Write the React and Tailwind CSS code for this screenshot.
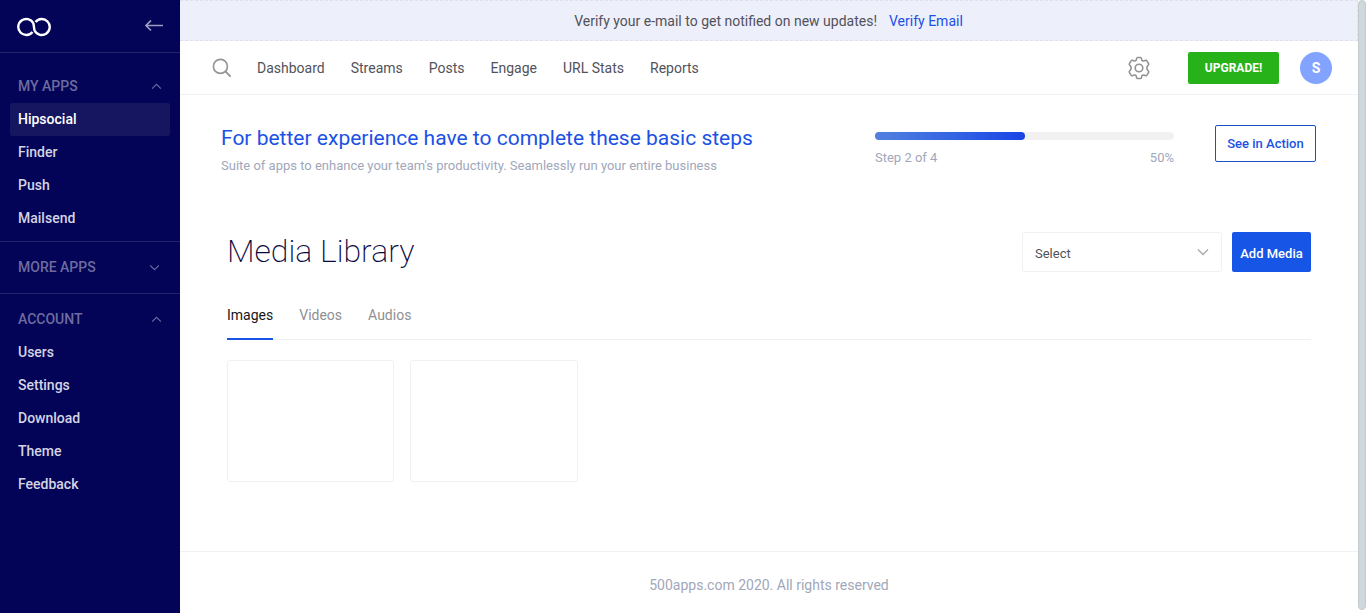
const chevronPaths = {
  up: "M1 6.5 6 1.5l5 5",
  down: "M1 1.5l5 5 5-5",
};

function Chevron({ direction, className }) {
  return (
    <svg viewBox="0 0 12 8" fill="none" stroke="currentColor" strokeWidth="1.3" className={className} aria-hidden="true">
      <path d={chevronPaths[direction]} />
    </svg>
  );
}

function SectionTitle({ label, open }) {
  return (
    <button
      type="button"
      aria-expanded={open}
      className={
        open
          ? "flex h-[34px] w-full items-center justify-between px-[18px] text-sm font-medium text-[#6d6c9f]"
          : "flex h-[34px] w-full items-center justify-between pr-5 pl-[18px] text-sm font-medium text-[#6d6c9f]"
      }
    >
      {label}
      <Chevron direction={open ? "up" : "down"} className="h-[7px] w-[11px]" />
    </button>
  );
}

function SideLinks({ items, active }) {
  return (
    <ul className="px-[10px]">
      {items.map((item) => (
        <li key={item}>
          <a
            href="#"
            className={
              item === active
                ? "flex h-[33px] items-center rounded-xs bg-[#151560] px-2 pb-[2px] text-sm font-medium text-white"
                : "flex h-[33px] items-center px-2 pb-[2px] text-sm font-medium text-[#d4d4e3]"
            }
          >
            {item}
          </a>
        </li>
      ))}
    </ul>
  );
}

function Sidebar() {
  return (
    <aside className="w-[180px] shrink-0 bg-[#030357]">
      <div className="flex h-[53px] items-center justify-between border-b border-[#232369] px-[17px]">
        <a href="#" aria-label="Home" className="pt-[2px]">
          <svg viewBox="0 0 34 20" fill="none" stroke="#fff" strokeWidth="2.4" className="h-5 w-[34px]" aria-hidden="true">
            <path d="M15.5 15A8 8 0 1 1 16.3 6.2C17 8 16.9 12 17.7 13.8A8 8 0 1 0 18.5 5" />
          </svg>
        </a>
        <button type="button" aria-label="Collapse sidebar" className="text-[#9c9bc0]">
          <svg viewBox="0 0 18 12" fill="none" stroke="currentColor" strokeWidth="1.7" className="h-3 w-[18px]" aria-hidden="true">
            <path d="M18 5.5H1M6 .5 1 5.5l5 5" />
          </svg>
        </button>
      </div>
      <div className="border-b border-[#232369] pt-4 pb-[6px]">
        <SectionTitle label="MY APPS" open />
        <SideLinks items={["Hipsocial", "Finder", "Push", "Mailsend"]} active="Hipsocial" />
      </div>
      <div className="border-b border-[#232369] pt-2 pb-[9px]">
        <SectionTitle label="MORE APPS" open={false} />
      </div>
      <div className="pt-2">
        <SectionTitle label="ACCOUNT" open />
        <SideLinks items={["Users", "Settings", "Download", "Theme", "Feedback"]} />
      </div>
    </aside>
  );
}

function GearIcon() {
  return (
    <svg viewBox="0 0 24 24" fill="none" stroke="currentColor" strokeWidth="1.6" strokeLinejoin="round" className="size-6" aria-hidden="true">
      <circle cx="12" cy="12" r="3.8" />
      <path d="M9.6 2.4Q9.8 1.5 10.6 1.5H13.4Q14.2 1.5 14.4 2.4L14.8 4.2Q15.6 5.2 16.9 4.9L18.6 4.3Q19.4 4 19.9 4.8L21.6 7.6Q22 8.4 21.4 9L20.3 10.2Q19.4 12 20.3 13.8L21.4 15Q22 15.6 21.6 16.4L19.9 19.2Q19.4 20 18.6 19.7L16.9 19.1Q15.6 18.8 14.8 19.8L14.4 21.6Q14.2 22.5 13.4 22.5H10.6Q9.8 22.5 9.6 21.6L9.2 19.8Q8.4 18.8 7.1 19.1L5.4 19.7Q4.6 20 4.1 19.2L2.4 16.4Q2 15.6 2.6 15L3.7 13.8Q4.6 12 3.7 10.2L2.6 9Q2 8.4 2.4 7.6L4.1 4.8Q4.6 4 5.4 4.3L7.1 4.9Q8.4 5.2 9.2 4.2Z" />
    </svg>
  );
}

function TopBar() {
  const links = ["Dashboard", "Streams", "Posts", "Engage", "URL Stats", "Reports"];
  return (
    <header className="flex h-[54px] items-center justify-between border-b border-[#f1f1f3] pl-8 pr-[26px]">
      <div className="flex items-center gap-[25px]">
        <button type="button" aria-label="Search" className="text-[#969696]">
          <svg viewBox="0 0 20 20" fill="none" stroke="currentColor" strokeWidth="1.7" className="size-5" aria-hidden="true">
            <circle cx="8.4" cy="8.4" r="7" />
            <path d="M13.4 13.4 18.6 18.6" strokeWidth="2" />
          </svg>
        </button>
        <nav className="flex items-center gap-[26px] pt-px text-sm text-[#52525a]">
          {links.map((link) => (
            <a key={link} href="#">
              {link}
            </a>
          ))}
        </nav>
      </div>
      <div className="flex items-center">
        <button type="button" aria-label="Settings" className="mr-[37px] text-[#929292]">
          <GearIcon />
        </button>
        <button type="button" className="mr-[21px] h-8 w-[91px] rounded-xs bg-[#26b218] text-xs font-bold text-white">
          UPGRADE!
        </button>
        <button type="button" aria-label="Account" className="size-8 rounded-full bg-[#82a3ff] text-sm font-bold text-white">
          S
        </button>
      </div>
    </header>
  );
}

function Onboarding() {
  return (
    <section className="flex items-start pl-[41px] pr-[42px] pt-[30px]">
      <div className="flex-1">
        <h2 className="text-[21px] leading-[26px] text-[#1b51e5]">
          For better experience have to complete these basic steps
        </h2>
        <p className="mt-[5px] text-[13px] leading-5 text-[#a1a7ba]">
          Suite of apps to enhance your team's productivity. Seamlessly run your entire business
        </p>
      </div>
      <div className="mr-[41px] w-[299px] pt-[7px]">
        <div
          role="progressbar"
          aria-label="Setup progress"
          aria-valuenow={50}
          aria-valuemin={0}
          aria-valuemax={100}
          className="h-2 rounded-full bg-[#f1f1f1]"
        >
          <div className="h-2 w-1/2 rounded-full bg-linear-to-r from-[#5380de] to-[#1a43e6]" />
        </div>
        <div className="mt-2 flex justify-between text-[13px] leading-5 text-[#a1a7ba]">
          <span>Step 2 of 4</span>
          <span>50%</span>
        </div>
      </div>
      <button type="button" className="h-[37px] w-[101px] rounded-xs border border-[#1b51c8] text-[13px] font-medium text-[#1b51e5]">
        See in Action
      </button>
    </section>
  );
}

function MediaLibrary() {
  return (
    <main className="px-[47px] pt-14">
      <div className="flex items-start justify-between">
        <h1 className="text-[32px] leading-[38px] font-extralight text-[#08083f]">Media Library</h1>
        <div className="flex gap-[10px]">
          <div className="relative">
            <select
              aria-label="Media source"
              defaultValue="Select"
              className="h-10 w-[200px] appearance-none rounded-xs border border-[#f1f1f3] bg-white px-3 pt-[3px] text-[13px] text-[#52525a]"
            >
              <option>Select</option>
            </select>
            <Chevron direction="down" className="pointer-events-none absolute top-4 right-3 h-2 w-[14px] text-[#a8a8a8]" />
          </div>
          <button type="button" className="h-10 w-[79px] rounded-xs bg-[#1655e6] pt-[3px] text-[13px] font-medium text-white">
            Add Media
          </button>
        </div>
      </div>
      <div role="tablist" className="mt-[18px] flex gap-[26px] border-b border-[#f1f1f3] text-sm text-[#8f8f93]">
        <button type="button" role="tab" aria-selected="true" className="-mb-px h-[50px] border-b-2 border-[#1655e6] pt-[2px] text-[#16161a]">
          Images
        </button>
        <button type="button" role="tab" aria-selected="false" className="-mb-px h-[50px] border-b-2 border-transparent pt-[2px]">
          Videos
        </button>
        <button type="button" role="tab" aria-selected="false" className="-mb-px h-[50px] border-b-2 border-transparent pt-[2px]">
          Audios
        </button>
      </div>
      <div className="mt-5 grid grid-cols-6 gap-4">
        <div className="h-[122px] rounded-[3px] border border-[#f1f1f3]" />
        <div className="h-[122px] rounded-[3px] border border-[#f1f1f3]" />
      </div>
    </main>
  );
}

export default function App() {
  return (
    <div className="flex min-h-screen bg-white font-[Roboto,sans-serif]">
      <Sidebar />
      <div className="flex min-w-0 flex-1 flex-col">
        <div className="flex h-[41px] items-center justify-center gap-3 border border-l-0 border-dashed border-[#dfe0ef] bg-[#edeffb] text-sm text-[#52525a]">
          <p>Verify your e-mail to get notified on new updates!</p>
          <a href="#" className="text-[#1b51e5]">
            Verify Email
          </a>
        </div>
        <TopBar />
        <Onboarding />
        <MediaLibrary />
        <footer className="mt-auto flex h-[62px] items-center justify-center border-t border-[#f1f1f3] pt-1 text-sm text-[#a1a7ba]">
          500apps.com 2020. All rights reserved
        </footer>
      </div>
      <div className="flex w-2 shrink-0 pb-[3px]" aria-hidden="true">
        <div className="w-full rounded-full border border-[#c3cacd] bg-[#cfd8dc]" />
      </div>
    </div>
  );
}
